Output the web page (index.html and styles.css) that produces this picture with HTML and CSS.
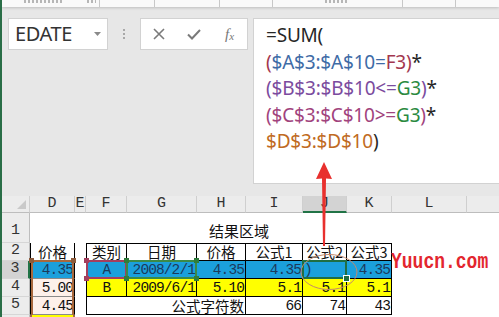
FILE: index.html
```html
<!DOCTYPE html>
<html>
<head>
<meta charset="utf-8">
<link rel="stylesheet" href="styles.css">
</head>
<body>
<div class="app">
  <div class="strip">
    <span class="sg" style="left:22px;width:38px"></span>
    <span class="sg" style="left:85px;width:9px"></span>
    <span class="sl" style="left:97px"></span>
    <span class="sl" style="left:152px"></span>
    <span class="sl" style="left:217px"></span>
    <span class="sl" style="left:270px"></span>
    <span class="sg" style="left:323px;width:22px"></span>
    <span class="sl" style="left:400px"></span>
    <span class="sl" style="left:453px"></span>
  </div>
  <div class="fbar">
    <div class="namebox">
      <span class="name">EDATE</span>
      <svg class="caret" width="7" height="4" viewBox="0 0 7 4"><path d="M0 0H7L3.5 4Z" fill="#8a8a8a"/></svg>
    </div>
    <div class="dots"><i></i><i></i><i></i></div>
    <div class="btns">
      <svg class="ico" width="12" height="12" viewBox="0 0 12 12"><path d="M1 1L11 11M11 1L1 11" stroke="#7a7a7a" stroke-width="1.6" fill="none"/></svg>
      <svg class="ico" width="14" height="11" viewBox="0 0 14 11"><path d="M1 5.5L5 9.5L13 1" stroke="#7a7a7a" stroke-width="2" fill="none"/></svg>
      <span class="fx">f<sub>x</sub></span>
    </div>
    <div class="fbox">
      <div class="fl"><span class="k">=SUM(</span></div>
      <div class="fl"><span class="r">(</span><span class="b">$A$3:$A$10=</span><span class="r">F3)</span><span class="k">*</span></div>
      <div class="fl"><span class="p">($B$3:$B$10&lt;=</span><span class="g">G3</span><span class="p">)</span><span class="k">*</span></div>
      <div class="fl"><span class="m">($C$3:$C$10&gt;=</span><span class="g">G3</span><span class="m">)</span><span class="k">*</span></div>
      <div class="fl"><span class="o">$D$3:$D$10</span><span class="k">)</span></div>
    </div>
  </div>
  <div class="sheet">
    <div class="ch corner"><svg width="9" height="9" viewBox="0 0 9 9"><path d="M9 0V9H0Z" fill="#c9c9c9"/></svg></div>
    <div class="ch">D</div><div class="ch">E</div><div class="ch">F</div><div class="ch">G</div><div class="ch">H</div><div class="ch">I</div><div class="ch sel">J</div><div class="ch">K</div><div class="ch">L</div><div class="ch last"></div>

    <div class="rh r1">1</div>
    <div class="c"></div><div class="c"></div>
    <div class="c title span6 zh">结果区域</div>
    <div class="c"></div><div class="c"></div>

    <div class="rh">2</div>
    <div class="c zh ctr dbox">价格</div><div class="c"></div>
    <div class="c zh ctr t tl tt">类别</div>
    <div class="c zh ctr t tt">日期</div>
    <div class="c zh ctr t tt">价格</div>
    <div class="c zh ctr t tt">公式1</div>
    <div class="c zh ctr t tt">公式2</div>
    <div class="c zh ctr t tt">公式3</div>
    <div class="c"></div><div class="c"></div>

    <div class="rh rsel">3</div>
    <div class="c num blue dbox dhl dtop">4.35</div><div class="c"></div>
    <div class="c num ctr blue t tl hl-f">A</div>
    <div class="c num rt blue t hl-g">2008/2/1</div>
    <div class="c num rt blue t">4.35</div>
    <div class="c num rt blue t">4.35</div>
    <div class="c num lt blue t act">)</div>
    <div class="c num rt blue t">4.35</div>
    <div class="c"></div><div class="c"></div>

    <div class="rh">4</div>
    <div class="c num peach dbox dhl">5.00</div><div class="c"></div>
    <div class="c num ctr yel t tl">B</div>
    <div class="c num rt yel t">2009/6/1</div>
    <div class="c num rt yel t">5.10</div>
    <div class="c num rt yel t">5.1</div>
    <div class="c num rt yel t">5.1</div>
    <div class="c num rt yel t">5.1</div>
    <div class="c"></div><div class="c"></div>

    <div class="rh">5</div>
    <div class="c num peach dbox dhl">4.45</div><div class="c"></div>
    <div class="c zh rt t tl span3">公式字符数</div>
    <div class="c num rt t">66</div>
    <div class="c num rt t">74</div>
    <div class="c num rt t">43</div>
    <div class="c"></div><div class="c"></div>

    <div class="rh"></div>
    <div class="c yel dhl"></div><div class="c"></div>
    <div class="c"></div><div class="c"></div><div class="c"></div><div class="c"></div><div class="c"></div><div class="c"></div><div class="c"></div><div class="c"></div>
  </div>

  <svg class="arrow" width="20" height="90" viewBox="0 0 20 90">
    <path d="M10 0L18 17L12 16.5L11 84L9 84L8 16.5L2 17Z" fill="#e8302e"/>
  </svg>
  <svg class="ring" width="60" height="40" viewBox="0 0 60 40">
    <ellipse cx="30" cy="20" rx="28" ry="17.5" fill="none" stroke="#c4896b" stroke-width="1"/>
  </svg>
  <div class="wm">Yuucn.com</div>
</div>
</body>
</html>
```

FILE: styles.css
```css
html, body {
  margin: 0;
  padding: 0;
}
body {
  width: 499px;
  height: 317px;
  overflow: hidden;
  background: #e7e7e7;
}
.app {
  position: relative;
  width: 499px;
  height: 317px;
  overflow: hidden;
  border-left: 2px solid #2a6e47;
  box-sizing: border-box;
  display: flex;
  flex-direction: column;
}
.strip {
  position: relative;
  height: 7px;
  flex: none;
  background: #f9f9f9;
  box-shadow: 0 1px 3px rgba(0,0,0,0.18);
  overflow: hidden;
  z-index: 1;
}
.sg {
  position: absolute;
  top: 0;
  height: 3px;
  background: repeating-linear-gradient(90deg, #8a8a8a 0 2px, transparent 2px 4px);
  opacity: 0.6;
}
.sl {
  position: absolute;
  top: 0;
  width: 1px;
  height: 7px;
  background: #c8c8c8;
}
.fbar {
  flex: none;
  height: 189px;
  box-sizing: border-box;
  padding: 11px 0 0 6px;
  display: flex;
  align-items: flex-start;
}
.namebox {
  width: 100px;
  height: 32px;
  box-sizing: border-box;
  background: #fff;
  border: 1px solid #d2d2d2;
  display: flex;
  align-items: center;
  padding-left: 6px;
}
.name {
  font: 20px "Noto Sans", sans-serif;
  color: #333;
  letter-spacing: -0.4px;
  flex: 1;
  line-height: 30px;
}
.caret {
  margin-right: 6px;
}
.dots {
  width: 32px;
  height: 32px;
  display: flex;
  flex-direction: column;
  align-items: center;
  justify-content: center;
  gap: 2px;
}
.dots i {
  display: block;
  width: 2px;
  height: 2px;
  background: #a8a8a8;
}
.btns {
  width: 108px;
  height: 32px;
  box-sizing: border-box;
  background: #fff;
  border: 1px solid #d2d2d2;
  display: flex;
  align-items: center;
  padding-left: 12px;
  gap: 22px;
}
.fx {
  font: italic 15px "Liberation Serif", serif;
  color: #777;
  margin-left: 2px;
}
.fx sub {
  font-size: 11px;
  vertical-align: -1px;
}
.fbox {
  margin-left: 5px;
  flex: 1;
  height: 166px;
  box-sizing: border-box;
  background: #fff;
  border: 1px solid #d2d2d2;
  border-right: none;
  padding: 3px 0 0 12px;
  font: 19px "Noto Sans", sans-serif;
  letter-spacing: -0.2px;
  line-height: 26.5px;
}
.fl { white-space: nowrap; }
.k { color: #262626; }
.r { color: #a3374f; }
.b { color: #3e6ba6; }
.p { color: #7b4b9e; }
.g { color: #2b8a3f; }
.m { color: #a1437d; }
.o { color: #c06a22; }

.sheet {
  flex: none;
  display: grid;
  grid-template-columns: 28px 45px 11px 41px 70px 49px 57px 44px 45px 75px 32px;
  grid-template-rows: 17px 30px 18px 18px 18px 18px 18px;
  background: #fff;
}
.ch {
  background: #ececec;
  border-right: 1px solid #cfcfcf;
  border-bottom: 1px solid #bdbdbd;
  box-sizing: border-box;
  font: 15px "Liberation Mono", monospace;
  color: #333;
  display: flex;
  align-items: center;
  justify-content: center;
  line-height: 16px;
}
.ch.corner {
  justify-content: flex-end;
  align-items: flex-end;
  padding: 0 3px 3px 0;
}
.ch.sel {
  background: #d3d3d3;
  border-bottom: 2px solid #217346;
}
.ch.last { border-right: none; }
.rh {
  background: #ececec;
  border-right: 1px solid #bdbdbd;
  border-bottom: 1px solid #d6d6d6;
  box-sizing: border-box;
  font: 15px "Liberation Mono", monospace;
  color: #333;
  display: flex;
  align-items: flex-end;
  justify-content: center;
  padding-bottom: 1px;
  line-height: 16px;
}
.rh.r1 { padding-bottom: 3px; }
.rh.rsel {
  background: #d3d3d3;
  border-right: 2px solid #217346;
}
.c {
  position: relative;
  box-sizing: border-box;
  display: flex;
  align-items: center;
  white-space: nowrap;
  color: #111;
  padding: 0 1px;
}
.zh {
  font: 14.5px "Noto Sans CJK SC", sans-serif;
  line-height: 16px;
}
.num {
  font: 14.5px "Liberation Mono", monospace;
  letter-spacing: -0.9px;
  line-height: 16px;
}
.ctr { justify-content: center; }
.rt { justify-content: flex-end; }
.lt { justify-content: flex-start; }
.title {
  justify-content: center;
  align-items: flex-end;
  padding-bottom: 4px;
  font-size: 15px;
}
.span6 { grid-column: span 6; }
.span3 { grid-column: span 3; }
.t {
  border-right: 1px solid #000;
  border-bottom: 1px solid #000;
}
.tl { border-left: 1px solid #000; }
.tt { border-top: 1px solid #000; }
.dbox {
  border-left: 1px solid #000;
  border-right: 1px solid #000;
  border-bottom: 1px solid #8a8a8a;
  justify-content: flex-end;
}
.dbox.zh { justify-content: center; border-bottom-color: #000; }
.blue { background: #1ba0dc; color: #1b3a5c; }
.yel { background: #ffff00; }
.peach { background: #fdf0ea; }
.dhl::before {
  content: "";
  position: absolute;
  top: 0;
  bottom: -1px;
  left: 0;
  right: 0;
  border-left: 2px solid #a8683d;
  border-right: 2px solid #a8683d;
}
.dtop::before { border-top: 2px solid #a8683d; top: -1px; }
.dtop::after {
  content: "";
  position: absolute;
  left: -2px;
  right: -2px;
  top: -3px;
  height: 5px;
  background:
    linear-gradient(#8c5a3a, #8c5a3a) 0 0 / 5px 5px no-repeat,
    linear-gradient(#8c5a3a, #8c5a3a) 100% 0 / 5px 5px no-repeat;
}
.hl-f::before, .hl-g::before {
  content: "";
  position: absolute;
  inset: -1px;
  border: 2px solid #a43f5e;
}
.hl-g::before { border-color: #3b8a48; }
.hl-f::after, .hl-g::after {
  content: "";
  position: absolute;
  inset: -3px;
  z-index: 2;
  background:
    linear-gradient(#a43f5e, #a43f5e) 0 0 / 5px 5px no-repeat,
    linear-gradient(#a43f5e, #a43f5e) 100% 0 / 5px 5px no-repeat,
    linear-gradient(#a43f5e, #a43f5e) 0 100% / 5px 5px no-repeat,
    linear-gradient(#a43f5e, #a43f5e) 100% 100% / 5px 5px no-repeat;
}
.hl-g::after {
  z-index: 3;
  background:
    linear-gradient(#2f7d3c, #2f7d3c) 0 0 / 5px 5px no-repeat,
    linear-gradient(#2f7d3c, #2f7d3c) 100% 0 / 5px 5px no-repeat,
    linear-gradient(#2f7d3c, #2f7d3c) 0 100% / 5px 5px no-repeat,
    linear-gradient(#2f7d3c, #2f7d3c) 100% 100% / 5px 5px no-repeat;
}
.act::before {
  content: "";
  position: absolute;
  inset: -1px;
  border: 2px solid #1f6e43;
}
.act::after {
  content: "";
  position: absolute;
  right: -4px;
  bottom: -4px;
  width: 5px;
  height: 5px;
  background: #1f6e43;
  border: 1px solid #fff;
  z-index: 2;
}
.arrow {
  position: absolute;
  left: 312px;
  top: 162px;
  z-index: 5;
}
.ring {
  position: absolute;
  left: 297px;
  top: 252px;
  z-index: 5;
}
.wm {
  position: absolute;
  left: 389px;
  top: 251px;
  z-index: 6;
  font: bold 18px "Liberation Mono", monospace;
  color: #e3262e;
  line-height: 22px;
  transform: scaleY(1.2);
  transform-origin: left center;
}
```
